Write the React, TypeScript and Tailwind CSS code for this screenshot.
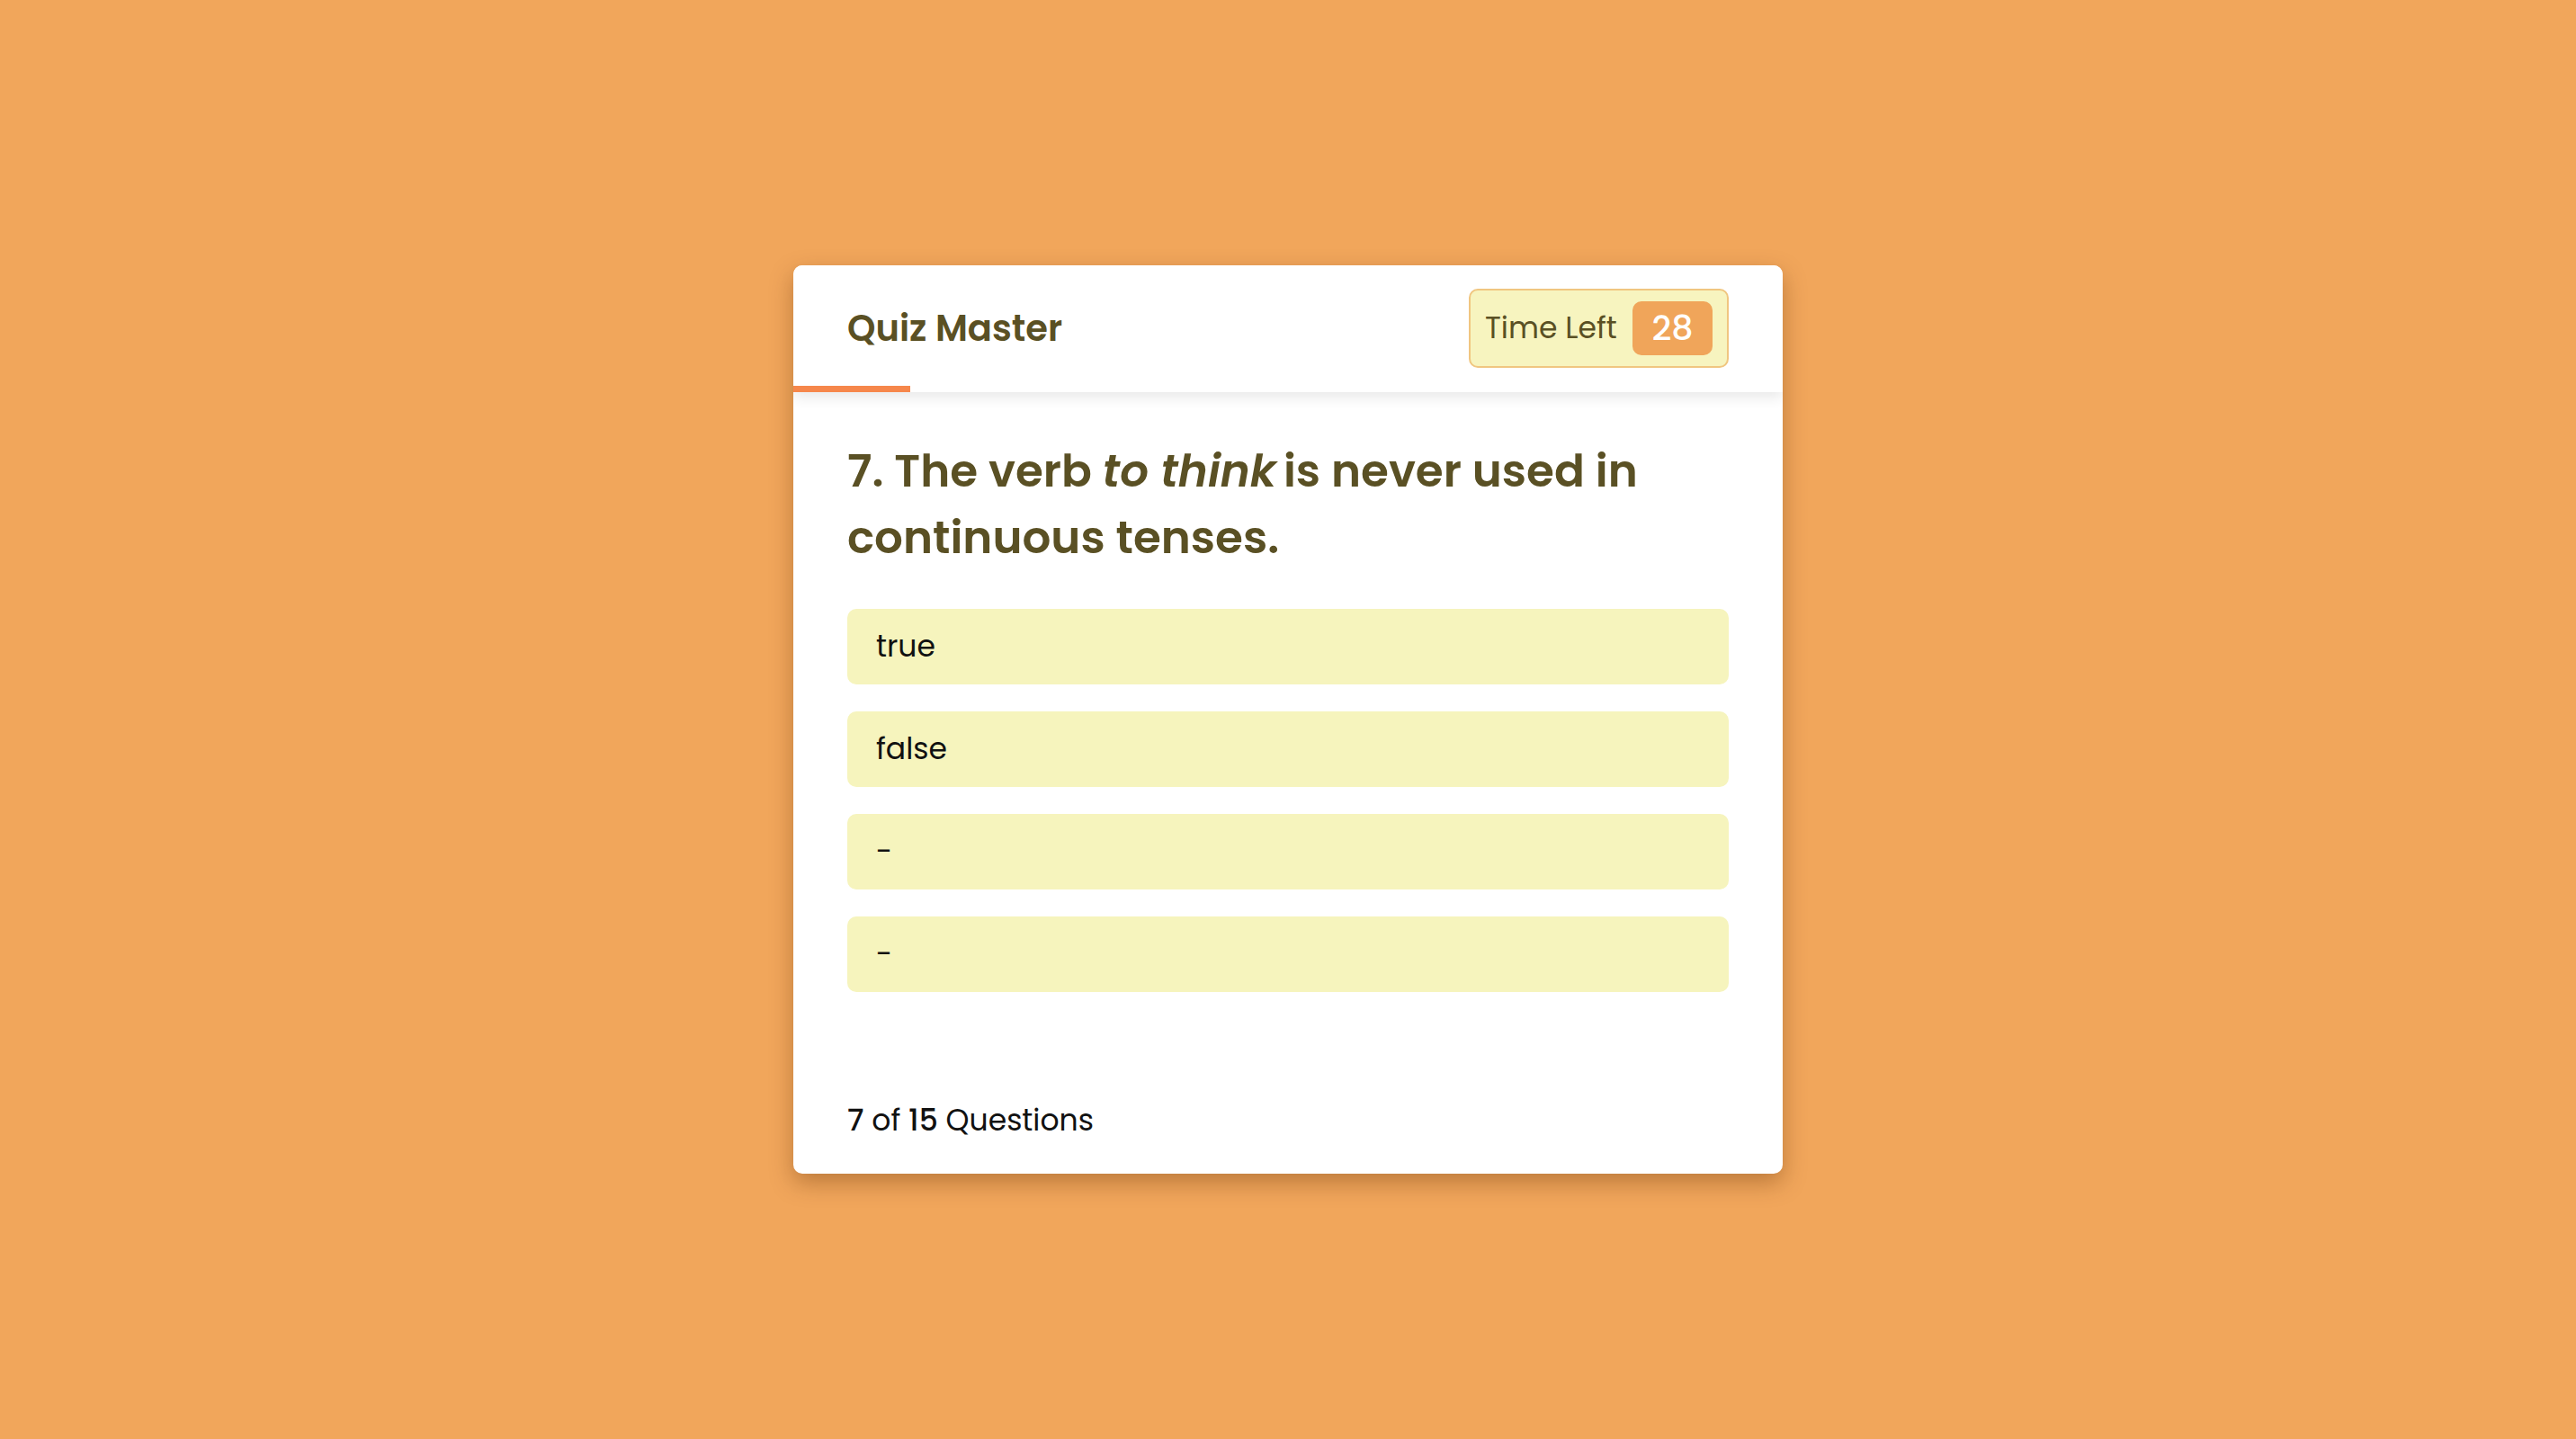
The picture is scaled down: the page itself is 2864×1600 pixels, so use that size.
import React from 'react';

const options = ['true', 'false', '-', '-'];

export default function App() {
  return (
    <div
      className="min-h-screen w-full bg-[#f1a65b] flex items-center justify-center"
      style={{ fontFamily: 'Poppins, Inter, "Noto Sans", sans-serif' }}
    >
      <div className="w-[1100px] bg-white rounded-[10px] shadow-[0_10px_26px_rgba(90,40,0,0.35)] flex flex-col overflow-hidden">
        <header className="relative z-10 h-[141px] px-[60px] flex items-center justify-between bg-white shadow-[0_6px_14px_rgba(0,0,0,0.09)]">
          <h1 className="text-[40px] font-semibold text-[#5a5024] leading-none -mt-[2px]">Quiz Master</h1>
          <div className="h-[88px] w-[289px] -mt-[2px] pl-[16px] pr-[16px] border-2 border-[#f0c680] bg-[#f7f4bf] rounded-[10px] flex items-center justify-between">
            <span className="text-[33px] text-[#5a5024] leading-none">Time Left</span>
            <span className="w-[89px] h-[60px] rounded-[10px] bg-[#f0a55a] flex items-center justify-center text-white text-[38px] font-medium leading-none">
              28
            </span>
          </div>
          <div className="absolute left-0 bottom-0 h-[7px] w-[130px] bg-[#f6874b]" />
        </header>

        <section className="px-[60px] pt-[51px] pb-[34px] flex flex-col">
          <h2 className="text-[50px] leading-[74px] font-semibold text-[#5a5024]">
            7. The verb <i className="-mr-[4px]">to think</i> is never used in continuous tenses.
          </h2>

          <div className="mt-[42px] flex flex-col gap-[30px]">
            {options.map((opt, i) => (
              <div
                key={i}
                className="h-[84px] px-[32px] rounded-[10px] bg-[#f6f4bd] flex items-center text-[33px] text-[#111111]"
              >
                {opt}
              </div>
            ))}
          </div>

          <footer className="mt-[118px] text-[33px] leading-[50px] text-[#111111]">
            <span className="font-medium">7</span> of <span className="font-medium">15</span> Questions
          </footer>
        </section>
      </div>
    </div>
  );
}
